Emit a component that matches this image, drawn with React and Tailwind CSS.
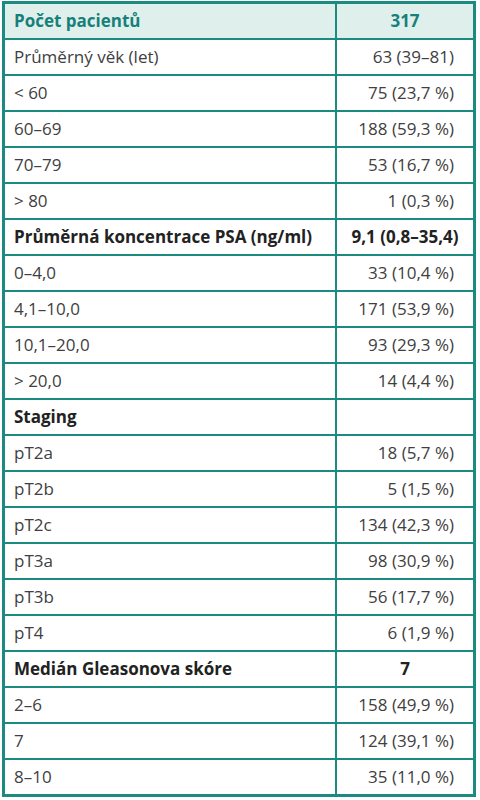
const rows = [
  { label: "Průměrný věk (let)", value: "63 (39–81)" },
  { label: "< 60", value: "75 (23,7 %)" },
  { label: "60–69", value: "188 (59,3 %)" },
  { label: "70–79", value: "53 (16,7 %)" },
  { label: "> 80", value: "1 (0,3 %)" },
  { label: "Průměrná koncentrace PSA (ng/ml)", value: "9,1 (0,8–35,4)", bold: true },
  { label: "0–4,0", value: "33 (10,4 %)" },
  { label: "4,1–10,0", value: "171 (53,9 %)" },
  { label: "10,1–20,0", value: "93 (29,3 %)" },
  { label: "> 20,0", value: "14 (4,4 %)" },
  { label: "Staging", value: "", bold: true },
  { label: "pT2a", value: "18 (5,7 %)" },
  { label: "pT2b", value: "5 (1,5 %)" },
  { label: "pT2c", value: "134 (42,3 %)" },
  { label: "pT3a", value: "98 (30,9 %)" },
  { label: "pT3b", value: "56 (17,7 %)" },
  { label: "pT4", value: "6 (1,9 %)" },
  { label: "Medián Gleasonova skóre", value: "7", bold: true },
  { label: "2–6", value: "158 (49,9 %)" },
  { label: "7", value: "124 (39,1 %)" },
  { label: "8–10", value: "35 (11,0 %)" },
];

export default function App() {
  return (
    <div className="w-[480px] h-[800px] bg-white pt-[1px] pl-[2px] font-['Open_Sans',sans-serif] text-[17px]">
      <div className="w-[474px] border-[3px] border-[#1b8a80]">
        {/* Header */}
        <div className="flex h-[34px] bg-[#dff0ec] text-[#17807a] font-bold">
          <div className="flex-1 flex items-center pl-[9px]">Počet pacientů</div>
          <div className="w-[138px] border-l-2 border-[#1b8a80] flex items-center justify-center">
            317
          </div>
        </div>
        {rows.map((r, i) => (
          <div
            key={i}
            className={`flex h-[36px] border-t-2 border-[#1b8a80] ${
              r.bold ? "font-bold text-[#222]" : "text-[#404040]"
            }`}
          >
            <div className="flex-1 flex items-center pl-[9px]">{r.label}</div>
            <div
              className={`w-[138px] border-l-2 border-[#1b8a80] flex items-center ${
                r.bold ? "justify-center" : "justify-end pr-[19px]"
              }`}
            >
              {r.value}
            </div>
          </div>
        ))}
      </div>
    </div>
  );
}
